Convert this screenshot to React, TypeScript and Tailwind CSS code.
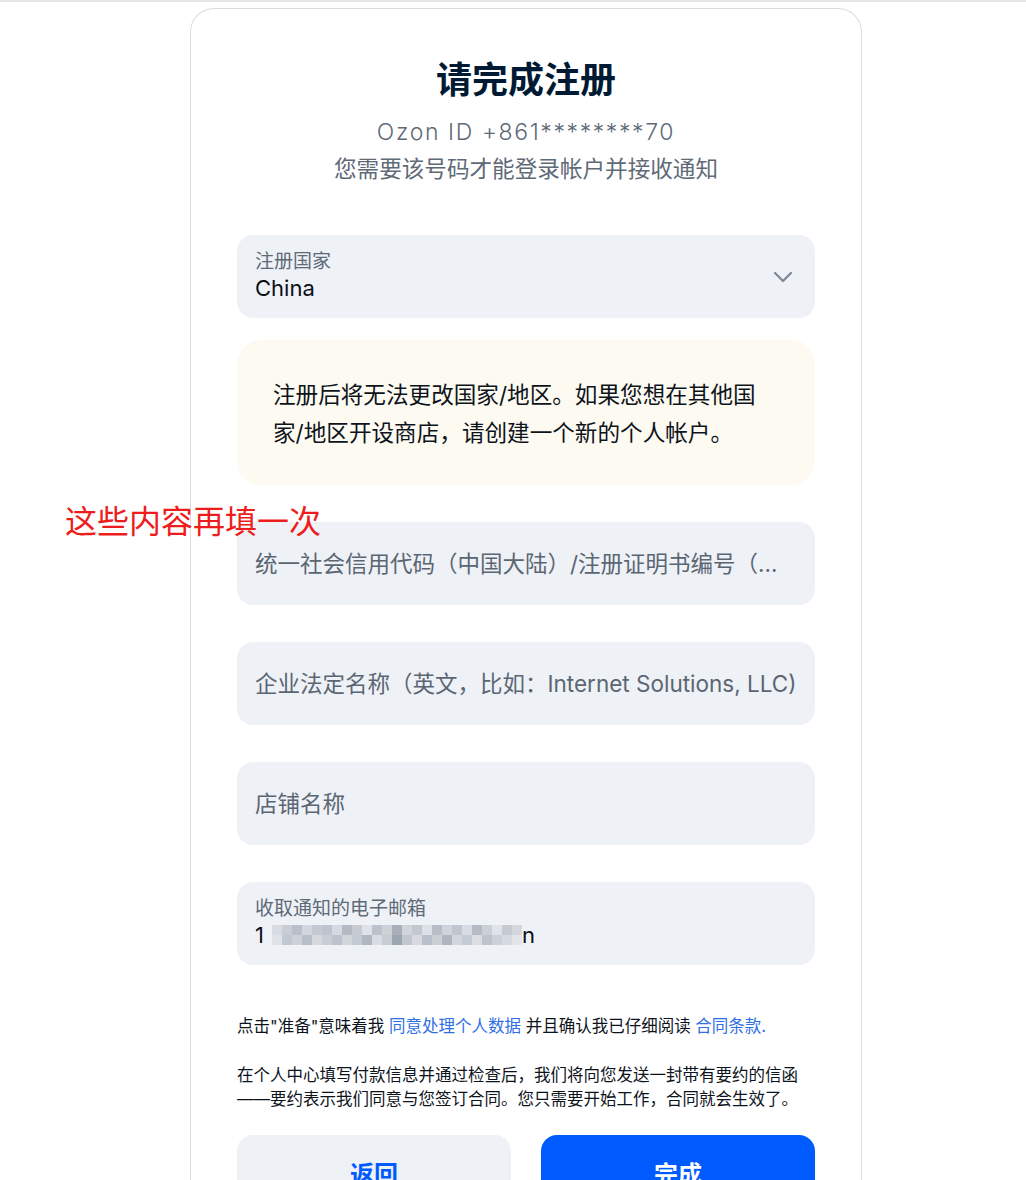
import React from "react";

const mosaic = [
  ["#d9dde3", "#c9ced6", "#b9c0ca", "#d2d7de", "#c4cad3", "#bfc5ce", "#d6dae0", "#b3bac4", "#c7ccd4", "#dfe2e7", "#bcc2cb", "#cdd2d9", "#a9b0ba", "#d0d5dc", "#c2c8d0", "#dde0e5", "#b7bec7", "#cfd4db", "#c0c6cf", "#d8dce2", "#b5bcc5", "#cbd0d7", "#e0e3e8", "#c6cbd3", "#d4d8de"],
  ["#dfe2e7", "#c2c8d0", "#cdd2d9", "#b8bfc8", "#d5d9df", "#c9ced6", "#bcc2cb", "#d1d6dc", "#c4cad2", "#b0b7c1", "#d9dce2", "#c7ccd4", "#9da5b0", "#c1c7cf", "#d6dae0", "#b9c0c9", "#cbd0d7", "#aeb5bf", "#d3d7dd", "#c5cbd3", "#dadee3", "#bec4cd", "#ccd1d8", "#d7dbe1", "#e2e5e9"],
];

const Field = ({ text }: { text: string }) => (
  <div className="mt-[37px] flex h-[83px] items-center rounded-[16px] bg-[#eef1f6] px-[18px]">
    <span className="truncate text-[22.5px] leading-[28px] text-[#5b6673]">{text}</span>
  </div>
);

export default function App() {
  return (
    <div className="relative min-h-[1180px] bg-white font-[Inter,'Noto_Sans_CJK_SC',sans-serif] text-[#001a34]">
      <div className="h-[2px] bg-[#e6e6e6]" />

      {/* annotation over the form */}
      <div className="absolute left-[65px] top-[502px] z-10 text-[32px] leading-[40px] text-[#ee1d1d]">
        这些内容再填一次
      </div>

      <div className="ml-[190px] mt-[6px] w-[672px] rounded-t-[24px] border border-b-0 border-[#dcdcdc] px-[46px] pb-[40px] pt-[49px]">
        <h1 className="text-center text-[36px] font-bold leading-[44px] text-[#001a34]">请完成注册</h1>
        <p className="mt-[12px] text-center text-[23px] font-light leading-[36px] tracking-[1.6px] text-[#5f6a77]">Ozon ID +861********70</p>
        <p className="text-center text-[22.6px] leading-[37px] text-[#5f6a77]">您需要该号码才能登录帐户并接收通知</p>

        {/* country select */}
        <div className="mt-[48px] flex h-[83px] items-center justify-between rounded-[16px] bg-[#eef1f6] pl-[18px] pr-[22px]">
          <div className="flex flex-col pb-[2px]">
            <span className="text-[19px] leading-[24px] text-[#5f6a77]">注册国家</span>
            <span className="text-[22px] leading-[28px] text-[#0a0f16]">China</span>
          </div>
          <svg width="20" height="12" viewBox="0 0 20 12" fill="none">
            <polyline points="2,2 10,10 18,2" stroke="#7c8795" strokeWidth="2.2" strokeLinecap="round" strokeLinejoin="round" />
          </svg>
        </div>

        {/* notice */}
        <div className="mt-[22px] rounded-[24px] bg-[#fdfaf1] pb-[33px] pl-[36px] pr-[20px] pt-[36px] text-[22.6px] leading-[38px] text-[#0d131b]">
          <span className="block">注册后将无法更改国家/地区。如果您想在其他国</span>
          <span className="block">家/地区开设商店，请创建一个新的个人帐户。</span>
        </div>

        <Field text="统一社会信用代码（中国大陆）/注册证明书编号（…" />
        <Field text="企业法定名称（英文，比如：Internet Solutions, LLC)" />
        <Field text="店铺名称" />

        {/* email */}
        <div className="mt-[37px] flex h-[83px] flex-col justify-center rounded-[16px] bg-[#eef1f6] px-[18px] pb-[2px]">
          <span className="text-[19px] leading-[24px] text-[#5f6a77]">收取通知的电子邮箱</span>
          <div className="flex h-[28px] items-center text-[22px] text-[#0a0f16]">
            <span className="leading-[28px]">1</span>
            <div className="ml-[8px] flex flex-col">
              {mosaic.map((row, i) => (
                <div key={i} className="flex">
                  {row.map((c, j) => (
                    <div key={j} className="h-[10px] w-[10px]" style={{ backgroundColor: c }} />
                  ))}
                </div>
              ))}
            </div>
            <span className="leading-[28px]">n</span>
          </div>
        </div>

        <p className="mt-[49px] text-[16.5px] leading-[24px] text-[#0d131b]">
          点击"准备"意味着我 <span className="text-[#2f6fe4]">同意处理个人数据</span> 并且确认我已仔细阅读{" "}
          <span className="text-[#2f6fe4]">合同条款.</span>
        </p>
        <p className="mt-[25px] text-[16.5px] leading-[24px] text-[#0d131b]">
          <span className="block">在个人中心填写付款信息并通过检查后，我们将向您发送一封带有要约的信函</span>
          <span className="block">——要约表示我们同意与您签订合同。您只需要开始工作，合同就会生效了。</span>
        </p>

        <div className="mt-[24px] grid grid-cols-2 gap-[30px]">
          <button className="h-[80px] rounded-[16px] bg-[#eef1f6] text-[24px] font-bold text-[#005bff]">返回</button>
          <button className="h-[80px] rounded-[16px] bg-[#005bff] text-[24px] font-bold text-white">完成</button>
        </div>
      </div>
    </div>
  );
}
